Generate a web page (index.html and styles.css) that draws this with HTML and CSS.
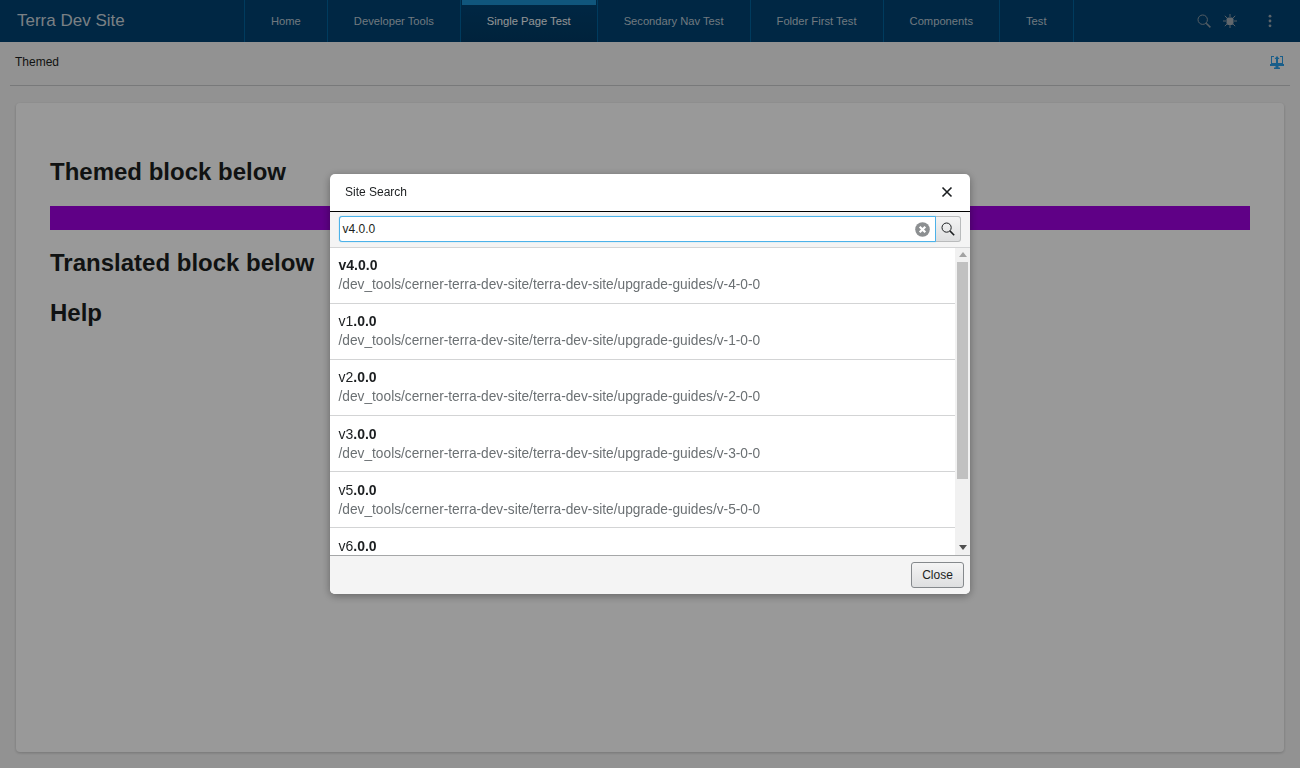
FILE: index.html
```html
<!DOCTYPE html>
<html lang="en">
<head>
  <meta charset="UTF-8" />
  <title>Terra Dev Site</title>
  <link rel="stylesheet" href="styles.css">
</head>
<body>

<header class="app-header">
  <div class="app-title">Terra Dev Site</div>
  <nav class="app-nav">
    <a class="nav-item">Home</a>
    <a class="nav-item">Developer Tools</a>
    <a class="nav-item selected">Single Page Test</a>
    <a class="nav-item">Secondary Nav Test</a>
    <a class="nav-item">Folder First Test</a>
    <a class="nav-item">Components</a>
    <a class="nav-item">Test</a>
  </nav>
  <div class="header-icons">
    <svg class="icon-search" width="14" height="14" viewBox="0 0 14 14"><circle cx="5.700" cy="5.700" r="4.700" fill="none" stroke="#8c9aa6" stroke-width="1"/><path d="M9.200 9.200l4.200 4.200" stroke="#8c9aa6" stroke-width="1.500"/></svg>
    <svg class="icon-bug" width="14" height="14" viewBox="0 0 14 14"><rect x="3.500" y="3.500" width="7" height="7.500" rx="2" fill="#a4aeb6"/><path d="M7 0v3M7 11v3M0 7h3M11 7h3M1.800 1.800l2.400 2.400M9.800 9.800l2.400 2.400M12.200 1.800L9.800 4.200M4.200 9.800l-2.400 2.400" stroke="#8c9aa6" stroke-width="1"/></svg>
    <svg class="icon-more" width="4" height="14" viewBox="0 0 4 14"><circle cx="2" cy="2.200" r="1.400" fill="#9aa6b0"/><circle cx="2" cy="7" r="1.400" fill="#9aa6b0"/><circle cx="2" cy="11.800" r="1.400" fill="#9aa6b0"/></svg>
  </div>
</header>

<div class="sub-bar">
  <span>Themed</span>
  <svg width="14" height="14" viewBox="0 0 14 14"><path d="M1 1h3v1H2v6h10V2h-2V1h3v8H1z" fill="#2a9de6"/><path d="M7 1l2.500 3H8v4H6V4H4.500z" fill="#2a9de6"/><path d="M0 9h14v2H8.500v1.500H10V14H4v-1.500h1.500V11H0z" fill="#2a9de6"/></svg>
</div>

<main class="content-card">
  <h2>Themed block below</h2>
  <div class="theme-block"></div>
  <h2>Translated block below</h2>
  <h2 class="help-title">Help</h2>
</main>

<div class="overlay">
  <div class="modal">
    <div class="modal-header">
      <span>Site Search</span>
      <svg width="12" height="12" viewBox="0 0 12 12"><path d="M1.500 1.500l9 9M10.500 1.500l-9 9" stroke="#1c1f21" stroke-width="1.600"/></svg>
    </div>
    <div class="search-row">
      <div class="search-input">
        <span>v4.0.0</span>
        <svg width="15" height="15" viewBox="0 0 15 15"><circle cx="7.500" cy="7.500" r="7.300" fill="#8c8f91"/><path d="M4.700 4.700l5.600 5.600M10.300 4.700l-5.600 5.600" stroke="#fff" stroke-width="2.200"/></svg>
      </div>
      <div class="search-button">
        <svg width="14" height="14" viewBox="0 0 14 14"><circle cx="5.600" cy="5.600" r="4.600" fill="none" stroke="#1c1f21" stroke-width="1"/><path d="M8.900 8.900l4.300 4.300" stroke="#1c1f21" stroke-width="1.500"/></svg>
      </div>
    </div>
    <div class="results-wrap">
      <ul class="results">
        <li><div class="result-title"><b>v4.0.0</b></div><div class="result-path">/dev_tools/cerner-terra-dev-site/terra-dev-site/upgrade-guides/v-4-0-0</div></li>
        <li><div class="result-title">v1<b>.0.0</b></div><div class="result-path">/dev_tools/cerner-terra-dev-site/terra-dev-site/upgrade-guides/v-1-0-0</div></li>
        <li><div class="result-title">v2<b>.0.0</b></div><div class="result-path">/dev_tools/cerner-terra-dev-site/terra-dev-site/upgrade-guides/v-2-0-0</div></li>
        <li><div class="result-title">v3<b>.0.0</b></div><div class="result-path">/dev_tools/cerner-terra-dev-site/terra-dev-site/upgrade-guides/v-3-0-0</div></li>
        <li><div class="result-title">v5<b>.0.0</b></div><div class="result-path">/dev_tools/cerner-terra-dev-site/terra-dev-site/upgrade-guides/v-5-0-0</div></li>
        <li><div class="result-title">v6<b>.0.0</b></div></li>
      </ul>
      <div class="scrollbar">
        <div class="arrow-up"></div>
        <div class="scroll-track"><div class="scroll-thumb"></div></div>
        <div class="arrow-down"></div>
      </div>
    </div>
    <div class="modal-footer">
      <button type="button">Close</button>
    </div>
  </div>
</div>

</body>
</html>
```
FILE: styles.css
```css
html, body {
  height: 100%;
}
body {
  margin: 0;
  height: 768px;
  overflow: hidden;
  font-family: "Liberation Sans", Arial, sans-serif;
  background: #f4f4f4;
  color: #1c1f21;
  display: flex;
  flex-direction: column;
}
.app-header {
  height: 42px;
  background: #004272;
  display: flex;
  align-items: stretch;
  flex-shrink: 0;
}
.app-title {
  width: 227px;
  padding-left: 17px;
  font-size: 17px;
  line-height: 42px;
  color: #ccd5dc;
}
.app-nav {
  display: flex;
  border-left: 1px solid #00639d;
}
.nav-item {
  padding: 0 26px;
  font-size: 11.2px;
  line-height: 42px;
  color: #bcc9d4;
  border-right: 1px solid #00639d;
}
.nav-item.selected {
  color: #f4f6f8;
  background: linear-gradient(#004272, #003a64);
  position: relative;
}
.nav-item.selected::before {
  content: "";
  position: absolute;
  top: 0;
  left: 1px;
  right: 1px;
  height: 5px;
  background: #1c90cf;
}
.header-icons {
  margin-left: auto;
  display: flex;
  align-items: center;
  padding-right: 28px;
}
.icon-search {
  margin-right: 12px;
}
.icon-bug {
  margin-right: 31px;
}
.sub-bar {
  height: 44px;
  margin: 0 10px;
  padding: 0 6px 3px 5px;
  box-sizing: border-box;
  display: flex;
  align-items: center;
  justify-content: space-between;
  font-size: 12px;
  color: #1c1f21;
  border-bottom: 1px solid #c8cacc;
  flex-shrink: 0;
}
.content-card {
  margin: 17px 16px 16px;
  padding: 54px 34px 0;
  flex: 1;
  background: #fff;
  border-radius: 4px;
  box-shadow: 0 1px 3px rgba(0, 0, 0, 0.2);
}
.content-card h2 {
  margin: 0;
  font-size: 24px;
  line-height: 30px;
  font-weight: bold;
}
.theme-block {
  height: 24px;
  margin: 19px 0 18px;
  background: #9e00df;
}
.content-card .help-title {
  margin-top: 20px;
}
.overlay {
  position: fixed;
  inset: 0;
  background: rgba(0, 0, 0, 0.4);
  display: flex;
  align-items: flex-start;
  justify-content: center;
}
.modal {
  margin-top: 174px;
  width: 640px;
  height: 420px;
  background: #fff;
  border-radius: 5px;
  overflow: hidden;
  display: flex;
  flex-direction: column;
  box-shadow: 0 2px 8px rgba(0, 0, 0, 0.35);
}
.modal-header {
  height: 38px;
  box-sizing: border-box;
  padding: 0 17px 2px 15px;
  display: flex;
  align-items: center;
  justify-content: space-between;
  font-size: 12px;
  border-bottom: 1px solid #000;
  flex-shrink: 0;
}
.search-row {
  height: 36px;
  padding: 4px 9px;
  box-sizing: border-box;
  display: flex;
  background: #f4f4f4;
  border-bottom: 1px solid #d3d4d5;
  flex-shrink: 0;
}
.search-input {
  flex: 1;
  height: 26px;
  box-sizing: border-box;
  padding: 0 5px 0 2.5px;
  display: flex;
  align-items: center;
  justify-content: space-between;
  background: #fff;
  border: 1px solid #4cb2e9;
  border-radius: 3px 0 0 3px;
  box-shadow: 0 0 1px #4cb2e9;
  font-size: 12px;
}
.search-button {
  width: 25px;
  height: 26px;
  box-sizing: border-box;
  display: flex;
  align-items: center;
  justify-content: center;
  background: linear-gradient(#f4f4f4, #dedfe0);
  border: 1px solid #b9bbbc;
  border-left: 0;
  border-radius: 0 3px 3px 0;
}
.results-wrap {
  flex: 1;
  display: flex;
  min-height: 0;
}
.results {
  flex: 1;
  margin: 0;
  padding: 0;
  list-style: none;
  overflow: hidden;
}
.results li {
  height: 56px;
  box-sizing: border-box;
  padding: 8px 8px 0 8.5px;
  border-bottom: 1px solid #d3d4d5;
  font-size: 14px;
  line-height: 19px;
}
.results li:nth-child(n+4) {
  padding-top: 9px;
}
.result-path {
  color: #6b7073;
  font-size: 13.72px;
}
.scrollbar {
  width: 15px;
  display: flex;
  flex-direction: column;
  align-items: center;
  background: #f1f1f1;
}
.arrow-up, .arrow-down {
  width: 0;
  height: 0;
  border-left: 4px solid transparent;
  border-right: 4px solid transparent;
}
.arrow-up {
  margin: 4px 0 5px;
  border-bottom: 5px solid #a3a3a3;
}
.arrow-down {
  margin: 4px 0 5px;
  border-top: 5px solid #505050;
}
.scroll-track {
  flex: 1;
  width: 100%;
  padding: 0 2px;
  box-sizing: border-box;
}
.scroll-thumb {
  height: 217px;
  background: #c1c1c1;
}
.modal-footer {
  height: 39px;
  box-sizing: border-box;
  padding: 6px;
  display: flex;
  justify-content: flex-end;
  background: #f4f4f4;
  border-top: 1px solid #a5a7a8;
  flex-shrink: 0;
}
.modal-footer button {
  width: 53px;
  height: 26px;
  padding: 0;
  font-family: inherit;
  font-size: 12px;
  color: #1c1f21;
  background: linear-gradient(#f4f4f4, #dedfe0);
  border: 1px solid #85898c;
  border-radius: 3px;
}
```
